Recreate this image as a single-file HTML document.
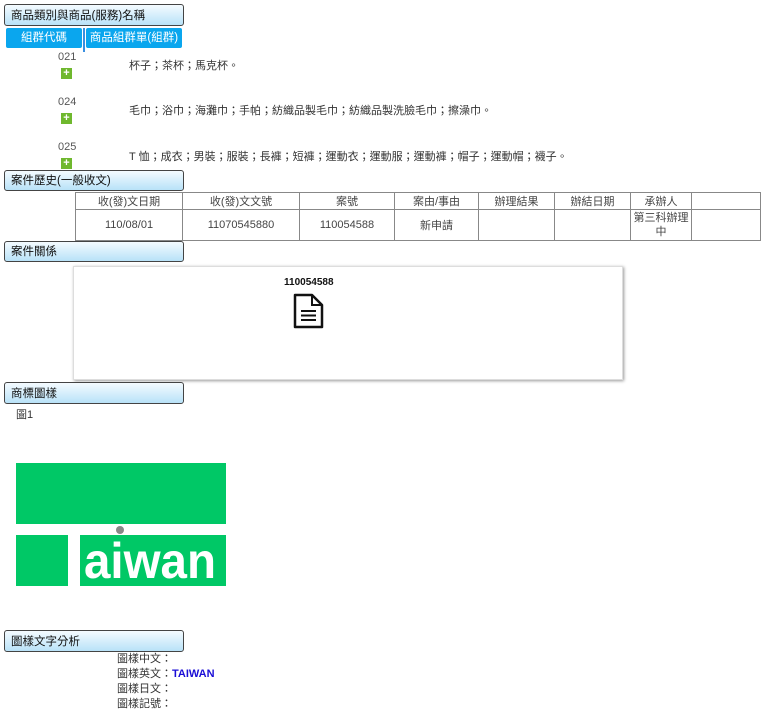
<!DOCTYPE html>
<html><head><meta charset="utf-8"><style>
body{margin:0;width:769px;height:717px;background:#fff;font-family:"Liberation Sans","Noto Sans CJK TC",sans-serif;font-size:11px;color:#333;position:relative;overflow:hidden}
.a{position:absolute}
.hd{position:absolute;left:4px;width:178px;height:20px;border:1px solid #444;border-radius:3px;background:linear-gradient(#f4fbff,#b8e2f8);font-size:11.5px;line-height:20px;padding-left:6px;box-sizing:border-box;width:180px;color:#111}
.tab{position:absolute;top:28px;height:20px;background:#0aa6ee;color:#fff;text-align:center;line-height:20px;font-size:11.5px;border-radius:2px}
.plus{position:absolute;left:61px;width:11px;height:11px;background:#6fb82e;color:#fff;font-size:11px;line-height:10px;text-align:center;font-weight:bold}
table{border-collapse:collapse;position:absolute;left:75px;top:192px;width:686px;font-size:11px;color:#444}
td{border:1px solid #888;text-align:center;padding:0}
</style></head><body>
<div class="hd" style="top:4px;height:22px;line-height:22px">商品類別與商品(服務)名稱</div>
<div class="tab" style="left:6px;width:76px">組群代碼</div>
<div class="a" style="left:83px;top:28px;width:2px;height:24px;background:#3a8fe0"></div>
<div class="tab" style="left:86px;width:96px">商品組群單(組群)</div>
<div class="a" style="left:58px;top:51px;color:#555">021</div><div class="plus" style="top:68px">+</div>
<div class="a" style="left:129px;top:57px">杯子；茶杯；馬克杯。</div>
<div class="a" style="left:58px;top:96px;color:#555">024</div><div class="plus" style="top:113px">+</div>
<div class="a" style="left:129px;top:102px">毛巾；浴巾；海灘巾；手帕；紡織品製毛巾；紡織品製洗臉毛巾；擦澡巾。</div>
<div class="a" style="left:58px;top:141px;color:#555">025</div><div class="plus" style="top:158px">+</div>
<div class="a" style="left:129px;top:148px">T 恤；成衣；男裝；服裝；長褲；短褲；運動衣；運動服；運動褲；帽子；運動帽；襪子。</div>
<div class="hd" style="top:170px;height:21px;line-height:21px">案件歷史(一般收文)</div>
<table>
<tr style="height:16px"><td style="width:106px">收(發)文日期</td><td style="width:116px">收(發)文文號</td><td style="width:94px">案號</td><td style="width:83px">案由/事由</td><td style="width:75px">辦理結果</td><td style="width:75px">辦結日期</td><td style="width:60px">承辦人</td><td></td></tr>
<tr style="height:31px"><td>110/08/01</td><td>11070545880</td><td>110054588</td><td>新申請</td><td></td><td></td><td style="line-height:14px">第三科辦理<br>中</td><td></td></tr>
</table>
<div class="hd" style="top:241px;height:21px;line-height:21px">案件關係</div>
<div class="a" style="left:73px;top:266px;width:548px;height:112px;border:1px solid #ddd;box-shadow:1px 1px 3px #999"></div>
<div class="a" style="left:284px;top:277px;font-weight:bold;font-size:10px;color:#111">110054588</div>
<svg class="a" style="left:292px;top:292px" width="34" height="38" viewBox="0 0 34 38"><path d="M3 3H20L30 13V35H3Z" fill="none" stroke="#111" stroke-width="2.5" stroke-linejoin="round"/><path d="M20 3V13H30" fill="none" stroke="#111" stroke-width="2"/><path d="M9 19H24M9 23.5H24M9 28H24" stroke="#111" stroke-width="2"/></svg>
<div class="hd" style="top:382px;height:22px;line-height:22px">商標圖樣</div>
<div class="a" style="left:16px;top:406px">圖1</div>
<div class="a" style="left:16px;top:463px;width:210px;height:61px;background:#00c866"></div>
<div class="a" style="left:116px;top:526px;width:8px;height:8px;border-radius:50%;background:#888"></div>
<div class="a" style="left:16px;top:535px;width:52px;height:51px;background:#00c866"></div>
<div class="a" style="left:80px;top:535px;width:146px;height:51px;background:#00c866;overflow:hidden"><div style="position:absolute;left:4px;top:-6px;color:#fff;font-size:50px;line-height:64px;font-weight:bold;letter-spacing:0px;transform:scaleX(0.95);transform-origin:left">aiwan</div></div>
<div class="hd" style="top:630px;height:22px;line-height:22px">圖樣文字分析</div>
<div class="a" style="left:117px;top:652px;line-height:15px">圖樣中文：<br>圖樣英文：<b style="color:#1a0dd6">TAIWAN</b><br>圖樣日文：<br>圖樣記號：</div>
</body></html>
